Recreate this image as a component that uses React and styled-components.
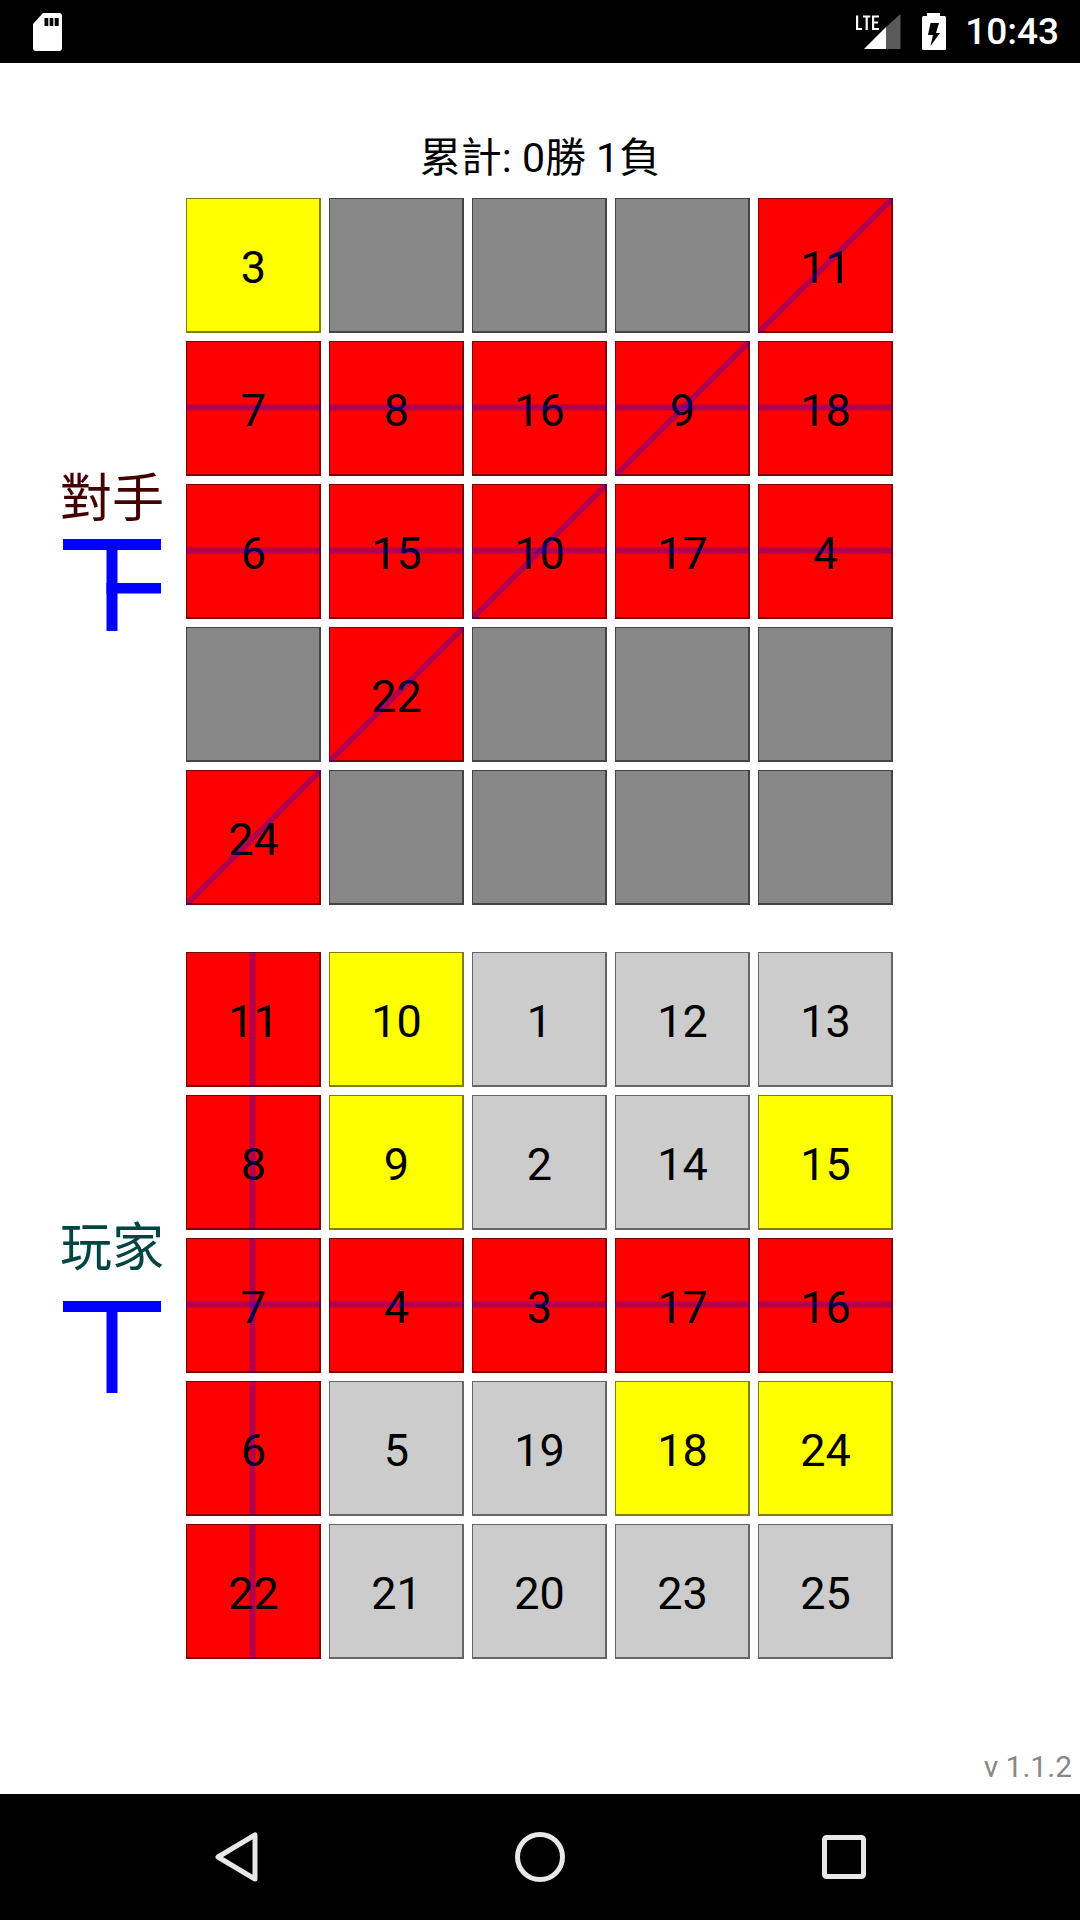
import React from "react"
import styled, { createGlobalStyle } from "styled-components"

const GlobalStyle = createGlobalStyle`
    html, body {
        margin: 0;
        padding: 0;
        background: #ffffff;
    }
    #root {
        width: 1080px;
        height: 1920px;
    }
`

const Screen = styled.div`
    display: flex;
    flex-direction: column;
    width: 1080px;
    height: 1920px;
    font-family: Roboto, "Noto Sans CJK TC", sans-serif;
    color: #000000;
`
const StatusBar = styled.header`
    display: flex;
    align-items: center;
    justify-content: space-between;
    height: 63px;
    padding: 0 21px 0 33px;
    box-sizing: border-box;
    background: #000000;
    color: #ffffff;
`
const StatusRight = styled.div`
    display: flex;
    align-items: center;
`
const SignalGlyph = styled.svg`
    display: block;
    margin-top: 1px;
`
const BatteryGlyph = styled.svg`
    display: block;
    margin-left: 21px;
`
const Clock = styled.span`
    margin-left: 19px;
    font-size: 37px;
    font-weight: 500;
    line-height: 63px;
`
const Main = styled.main`
    display: flex;
    flex-direction: column;
    flex: 1;
    min-height: 0;
`
const Score = styled.h1`
    margin: 71px 0 0;
    height: 64px;
    font-size: 41px;
    font-weight: 400;
    line-height: 48px;
    text-align: center;
`
const Board = styled.section`
    display: flex;
    margin-top: ${(p) => p.$top}px;
`
const Side = styled.div`
    display: flex;
    flex-direction: column;
    align-items: center;
    justify-content: center;
    width: 186px;
    padding: 0 0 ${(p) => p.$lift}px 38px;
    box-sizing: border-box;
`
const SideName = styled.div`
    width: 112px;
    margin-bottom: ${(p) => p.$gap}px;
    font-size: 52px;
    line-height: 64px;
    text-align: center;
    color: ${(p) => p.$color};
`
const Tally = styled.svg`
    display: block;
    width: 98px;
    height: 92px;
`
const Grid = styled.div`
    display: grid;
    grid-template-columns: repeat(5, 135px);
    grid-auto-rows: 135px;
    gap: 8px;
`
const cellColors = { red: "#ff0000", yellow: "#ffff00", dark: "#888888", light: "#cccccc" }
const Cell = styled.div`
    position: relative;
    display: flex;
    align-items: center;
    justify-content: center;
    box-sizing: border-box;
    padding: 5px 0 0 1px;
    border: solid rgba(0, 0, 0, 0.5);
    border-width: 1px 2px 2px 1px;
    background: ${(p) => cellColors[p.$kind]};
    font-size: 45px;
`
const Strikes = styled.svg`
    position: absolute;
    left: -1px;
    top: -1px;
    width: 135px;
    height: 135px;
    stroke: rgba(0, 0, 255, 0.3);
    stroke-width: 6;
`
const Version = styled.div`
    margin-top: auto;
    padding: 0 8px 10px 0;
    font-size: 30px;
    line-height: 34px;
    text-align: right;
    color: #888888;
`
const NavBar = styled.footer`
    display: flex;
    align-items: center;
    height: 126px;
    background: #000000;
`
const NavSlot = styled.div`
    display: flex;
    justify-content: center;
    flex: 0 0 ${(p) => p.$width}px;
    margin-left: ${(p) => p.$left}px;
`

const STRIKE = {
    h: { x1: 0, y1: 66.5, x2: 135, y2: 66.5 },
    v: { x1: 66.5, y1: 0, x2: 66.5, y2: 135 },
    d: { x1: 0, y1: 135, x2: 135, y2: 0 },
}

const red = (n, lines) => ({ n, kind: "red", lines })
const yellow = (n) => ({ n, kind: "yellow" })
const light = (n) => ({ n, kind: "light" })
const dark = () => ({ kind: "dark" })

const opponent = [
    yellow(3), dark(), dark(), dark(), red(11, "d"),
    red(7, "h"), red(8, "h"), red(16, "h"), red(9, "hd"), red(18, "h"),
    red(6, "h"), red(15, "h"), red(10, "hd"), red(17, "h"), red(4, "h"),
    dark(), red(22, "d"), dark(), dark(), dark(),
    red(24, "d"), dark(), dark(), dark(), dark(),
]
const player = [
    red(11, "v"), yellow(10), light(1), light(12), light(13),
    red(8, "v"), yellow(9), light(2), light(14), yellow(15),
    red(7, "hv"), red(4, "h"), red(3, "h"), red(17, "h"), red(16, "h"),
    red(6, "v"), light(5), light(19), yellow(18), yellow(24),
    red(22, "v"), light(21), light(20), light(23), light(25),
]

const BingoGrid = ({ cells }) => (
    <Grid>
        {cells.map((cell, i) => (
            <Cell key={i} $kind={cell.kind}>
                {cell.n}
                {cell.lines && (
                    <Strikes viewBox="0 0 135 135">
                        {cell.lines.split("").map((l) => (
                            <line key={l} {...STRIKE[l]} />
                        ))}
                    </Strikes>
                )}
            </Cell>
        ))}
    </Grid>
)

// tally marks: the bars a side has finished so far
const TallyMark = ({ branch }) => (
    <Tally viewBox="0 0 98 92" fill="#0000ff">
        <rect x="0" y="0" width="98" height="11" />
        <rect x="43.5" y="0" width="11" height="92" />
        {branch && <rect x="43.5" y="44" width="54.5" height="10.5" />}
    </Tally>
)

const SdIcon = () => (
    <svg width="29" height="38" viewBox="0 0 29 38" fill="#ffffff">
        <path d="M10 0H26a3 3 0 0 1 3 3V35a3 3 0 0 1-3 3H3a3 3 0 0 1-3-3V11Z" />
        <rect x="11.5" y="5" width="3.8" height="8" fill="#000000" />
        <rect x="16.7" y="5" width="3.6" height="8" fill="#000000" />
        <rect x="21.7" y="5" width="4" height="8" fill="#000000" />
    </svg>
)

const SignalIcon = () => (
    <SignalGlyph width="46" height="36" viewBox="0 0 46 36">
        <path d="M9 35 L31 13 V35Z" fill="#ffffff" />
        <path d="M31 13 L45.5 0 V35 H31Z" fill="#5a5a5a" />
        <path
            d="M1 1.5V16H7V14H3.2V1.5ZM8 1.5V3.5H10.6V16H12.8V3.5H15.4V1.5ZM17 1.5V16H24V14H19.2V9.5H23V7.5H19.2V3.5H24V1.5Z"
            fill="#ffffff"
        />
    </SignalGlyph>
)

const BatteryIcon = () => (
    <BatteryGlyph width="24" height="37" viewBox="0 0 24 37">
        <path d="M5 0H18V3H22.5A1.5 1.5 0 0 1 24 4.5V35.5A1.5 1.5 0 0 1 22.5 37H1.5A1.5 1.5 0 0 1 0 35.5V4.5A1.5 1.5 0 0 1 1.5 3H5Z" fill="#ffffff" />
        <path d="M8.5 10H17L14 20H18L8.5 33L11 22H6Z" fill="#000000" />
    </BatteryGlyph>
)

const BackIcon = () => (
    <svg width="43" height="50" viewBox="0 0 43 50" fill="none" stroke="#e8e8e8" strokeWidth="5" strokeLinejoin="round">
        <path d="M40 3 V47 L3 25 Z" />
    </svg>
)

const HomeIcon = () => (
    <svg width="50" height="50" viewBox="0 0 50 50" fill="none" stroke="#e8e8e8" strokeWidth="5">
        <circle cx="25" cy="25" r="22.5" />
    </svg>
)

const RecentIcon = () => (
    <svg width="44" height="44" viewBox="0 0 44 44" fill="none" stroke="#e8e8e8" strokeWidth="5" strokeLinejoin="round">
        <rect x="2.5" y="2.5" width="39" height="39" rx="2" />
    </svg>
)

const App = () => {
    return (
        <Screen>
            <GlobalStyle />
            <StatusBar>
                <SdIcon />
                <StatusRight>
                    <SignalIcon />
                    <BatteryIcon />
                    <Clock>10:43</Clock>
                </StatusRight>
            </StatusBar>
            <Main>
                <Score>累計: 0勝 1負</Score>
                <Board $top={0}>
                    <Side $lift={5}>
                        <SideName $color="#440000" $gap={7}>對手</SideName>
                        <TallyMark branch />
                    </Side>
                    <BingoGrid cells={opponent} />
                </Board>
                <Board $top={47}>
                    <Side $lift={1}>
                        <SideName $color="#004444" $gap={20}>玩家</SideName>
                        <TallyMark />
                    </Side>
                    <BingoGrid cells={player} />
                </Board>
                <Version>v 1.1.2</Version>
            </Main>
            <NavBar>
                <NavSlot $left={215} $width={43}><BackIcon /></NavSlot>
                <NavSlot $left={257} $width={50}><HomeIcon /></NavSlot>
                <NavSlot $left={257} $width={44}><RecentIcon /></NavSlot>
            </NavBar>
        </Screen>
    )
}

export default App
